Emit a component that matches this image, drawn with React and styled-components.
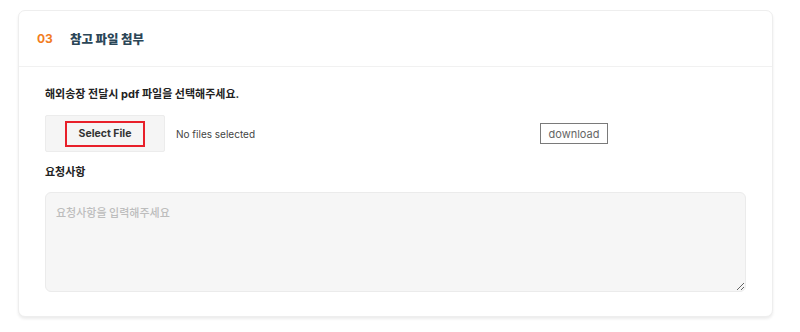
import React from "react";
import styled, { createGlobalStyle } from "styled-components";

const Global = createGlobalStyle`
  html, body { margin: 0; padding: 0; background: #ffffff; }
  body { font-family: Inter, "Noto Sans CJK KR", "Noto Sans", sans-serif; color: #222; }
  * { box-sizing: border-box; }
`;

const Page = styled.div`
  padding: 10px 27px 16px 18px;
`;

const Card = styled.section`
  background: #fff;
  border: 1px solid #eeeeee;
  border-radius: 7px;
  box-shadow: 0 2px 3px rgba(0, 0, 0, 0.08);
`;

const Header = styled.header`
  height: 56px;
  display: flex;
  align-items: center;
  padding-left: 18px;
  border-bottom: 1px solid #f1f1f1;
`;

const Step = styled.span`
  font-family: Inter, sans-serif;
  font-size: 12px;
  font-weight: 700;
  color: #f27d1f;
  width: 33px;
`;

const Title = styled.h2`
  margin: 0;
  font-family: Inter, "Noto Sans CJK KR", sans-serif;
  font-size: 12.5px;
  font-weight: 900;
  color: #2b4657;
`;

const Body = styled.div`
  padding: 20px 26px 24px 26px;
  display: flex;
  flex-direction: column;
`;

const Label = styled.label`
  font-family: Inter, "Noto Sans CJK KR", sans-serif;
  font-size: 11px;
  font-weight: 700;
  line-height: 15px;
  color: #222;
  margin-bottom: ${(p) => p.$gap}px;
`;

const FileRow = styled.div`
  display: flex;
  align-items: center;
  margin-bottom: 13px;
`;

const FileField = styled.div`
  width: 495px;
  display: flex;
  align-items: center;
  gap: 11px;
`;

const FileBox = styled.div`
  width: 120px;
  height: 37px;
  background: #f5f5f5;
  border: 1px solid #ececec;
  border-radius: 2px;
  display: flex;
  align-items: center;
  justify-content: center;
`;

const SelectButton = styled.button`
  width: 80px;
  height: 26px;
  border: 2px solid #e8202a;
  background: transparent;
  font-family: Inter, sans-serif;
  font-size: 10.5px;
  font-weight: 700;
  color: #333;
  padding: 0;
`;

const FileStatus = styled.span`
  font-family: Inter, sans-serif;
  font-size: 10px;
  color: #444;
`;

const DownloadButton = styled.button`
  width: 68px;
  height: 21px;
  border: 1.5px solid #7a7a7a;
  background: #fff;
  font-family: Inter, sans-serif;
  font-size: 11px;
  color: #666;
  padding: 0;
`;

const TextArea = styled.textarea`
  width: 701px;
  height: 100px;
  background: #f6f6f6;
  border: 1px solid #ebebeb;
  border-radius: 6px;
  padding: 12px 10px;
  font-family: "Noto Sans CJK KR", sans-serif;
  font-size: 11px;
  font-weight: 500;
  line-height: 14px;
  resize: both;
  outline: none;
  &::placeholder { color: #bdbdbd; }
`;

export default function App() {
  return (
    <>
      <Global />
      <Page>
        <Card>
          <Header>
            <Step>03</Step>
            <Title>참고 파일 첨부</Title>
          </Header>
          <Body>
            <Label $gap={13}>해외송장 전달시 pdf 파일을 선택해주세요.</Label>
            <FileRow>
              <FileField>
                <FileBox>
                  <SelectButton type="button">Select File</SelectButton>
                </FileBox>
                <FileStatus>No files selected</FileStatus>
              </FileField>
              <DownloadButton type="button">download</DownloadButton>
            </FileRow>
            <Label $gap={12}>요청사항</Label>
            <TextArea placeholder="요청사항을 입력해주세요" />
          </Body>
        </Card>
      </Page>
    </>
  );
}
